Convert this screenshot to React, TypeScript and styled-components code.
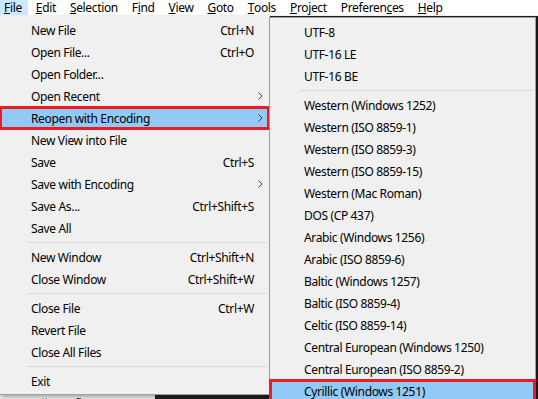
import React from 'react';
import styled, { createGlobalStyle } from 'styled-components';

const GlobalStyle = createGlobalStyle`
  html, body {
    margin: 0;
    padding: 0;
    width: 538px;
    height: 399px;
    overflow: hidden;
    background: #1e1e1e;
  }
  * { box-sizing: border-box; }
`;

type Entry =
  | { kind: 'item'; label: string; shortcut?: string; sub?: boolean; marked?: boolean }
  | { kind: 'sep' };

const fileEntries: Entry[] = [
  { kind: 'item', label: 'New File', shortcut: 'Ctrl+N' },
  { kind: 'item', label: 'Open File...', shortcut: 'Ctrl+O' },
  { kind: 'item', label: 'Open Folder...' },
  { kind: 'item', label: 'Open Recent', sub: true },
  { kind: 'item', label: 'Reopen with Encoding', sub: true, marked: true },
  { kind: 'item', label: 'New View into File' },
  { kind: 'item', label: 'Save', shortcut: 'Ctrl+S' },
  { kind: 'item', label: 'Save with Encoding', sub: true },
  { kind: 'item', label: 'Save As...', shortcut: 'Ctrl+Shift+S' },
  { kind: 'item', label: 'Save All' },
  { kind: 'sep' },
  { kind: 'item', label: 'New Window', shortcut: 'Ctrl+Shift+N' },
  { kind: 'item', label: 'Close Window', shortcut: 'Ctrl+Shift+W' },
  { kind: 'sep' },
  { kind: 'item', label: 'Close File', shortcut: 'Ctrl+W' },
  { kind: 'item', label: 'Revert File' },
  { kind: 'item', label: 'Close All Files' },
  { kind: 'sep' },
  { kind: 'item', label: 'Exit' },
];

const encodings: Entry[] = [
  { kind: 'item', label: 'UTF-8' },
  { kind: 'item', label: 'UTF-16 LE' },
  { kind: 'item', label: 'UTF-16 BE' },
  { kind: 'sep' },
  { kind: 'item', label: 'Western (Windows 1252)' },
  { kind: 'item', label: 'Western (ISO 8859-1)' },
  { kind: 'item', label: 'Western (ISO 8859-3)' },
  { kind: 'item', label: 'Western (ISO 8859-15)' },
  { kind: 'item', label: 'Western (Mac Roman)' },
  { kind: 'item', label: 'DOS (CP 437)' },
  { kind: 'item', label: 'Arabic (Windows 1256)' },
  { kind: 'item', label: 'Arabic (ISO 8859-6)' },
  { kind: 'item', label: 'Baltic (Windows 1257)' },
  { kind: 'item', label: 'Baltic (ISO 8859-4)' },
  { kind: 'item', label: 'Celtic (ISO 8859-14)' },
  { kind: 'item', label: 'Central European (Windows 1250)' },
  { kind: 'item', label: 'Central European (ISO 8859-2)' },
  { kind: 'item', label: 'Cyrillic (Windows 1251)', marked: true },
];

// [label, index of the underlined mnemonic letter]
const topMenus: [string, number][] = [
  ['File', 0],
  ['Edit', 0],
  ['Selection', 0],
  ['Find', 1],
  ['View', 0],
  ['Goto', 0],
  ['Tools', 0],
  ['Project', 0],
  ['Preferences', 8],
  ['Help', 0],
];

function Chevron() {
  return (
    <ArrowIcon width="5" height="8" viewBox="0 0 5 8">
      <polyline points="0.5,0.5 4,4 0.5,7.5" fill="none" stroke="#333" strokeWidth="1" />
    </ArrowIcon>
  );
}

function MenuList({ entries, inset }: { entries: Entry[]; inset: number }) {
  return (
    <>
      {entries.map((e, i) =>
        e.kind === 'sep' ? (
          <Separator key={i} $inset={inset} />
        ) : (
          <Item key={i} $marked={!!e.marked} $inset={inset}>
            <Label>{e.label}</Label>
            {e.shortcut && <Shortcut>{e.shortcut}</Shortcut>}
            {e.sub && <Chevron />}
          </Item>
        )
      )}
    </>
  );
}

export default function App() {
  return (
    <Window>
      <GlobalStyle />
      <MenuBar>
        {topMenus.map(([name, idx], i) => (
          <TopItem key={name} $active={i === 0}>
            {name.slice(0, idx)}
            <Mnemonic>{name[idx]}</Mnemonic>
            {name.slice(idx + 1)}
          </TopItem>
        ))}
      </MenuBar>
      <Workspace>
        <Sidebar>
          <SideRow>
            <SideIcon>/*</SideIcon>
            Carfix.tra
          </SideRow>
        </Sidebar>
        <Editor />
      </Workspace>

      <FileMenu>
        <MenuList entries={fileEntries} inset={31} />
      </FileMenu>
      <SubMenu>
        <MenuList entries={encodings} inset={34} />
      </SubMenu>
    </Window>
  );
}

const Window = styled.div`
  position: relative;
  width: 538px;
  height: 399px;
  display: flex;
  flex-direction: column;
  font-family: 'Segoe UI', 'Noto Sans', 'Open Sans', sans-serif;
  font-size: 12px;
  letter-spacing: -0.35px;
  color: #000;
  overflow: hidden;
`;

const MenuBar = styled.div`
  height: 16px;
  flex-shrink: 0;
  background: #fff;
  display: flex;
  align-items: stretch;
  border-bottom: 1px solid #f0f0f0;
`;

const TopItem = styled.div<{ $active: boolean }>`
  display: flex;
  align-items: center;
  padding: 0 6px 0 4px;
  margin-right: 4px;
  line-height: 15px;
  height: 15px;
  background: ${p => (p.$active ? '#cce8ff' : 'transparent')};
  white-space: pre;
`;

const Mnemonic = styled.u`
  text-decoration: underline;
  text-underline-offset: 1px;
`;

const Workspace = styled.div`
  flex: 1;
  display: flex;
`;

const Sidebar = styled.div`
  width: 155px;
  background: #e6e6e6;
  display: flex;
  flex-direction: column;
  justify-content: flex-end;
`;

const SideRow = styled.div`
  height: 18px;
  margin-bottom: -14px;
  display: flex;
  align-items: flex-start;
  gap: 8px;
  padding-left: 40px;
  color: #222;
`;

const SideIcon = styled.span`
  color: #777;
  font-size: 10px;
`;

const Editor = styled.div`
  flex: 1;
  background: #1e1e1e;
`;

const Panel = styled.div`
  position: absolute;
  background: #f0f0f0;
  border: 1px solid #a0a0a0;
  display: flex;
  flex-direction: column;
  box-shadow: 2px 2px 3px rgba(0, 0, 0, 0.25);
`;

const FileMenu = styled(Panel)`
  top: 16px;
  left: 0;
  width: 270px;
  padding: 2px 0;
  border-left: none;
  border-top-color: #f0f0f0;
`;

const SubMenu = styled(Panel)`
  top: 17px;
  left: 269px;
  width: 267px;
  height: 400px;
  padding: 3px 0;
`;

const Item = styled.div<{ $marked: boolean; $inset: number }>`
  position: relative;
  height: 22px;
  flex-shrink: 0;
  display: flex;
  align-items: center;
  padding: 0 6px 0 ${p => p.$inset}px;
  background: ${p => (p.$marked ? '#91c9f7' : 'transparent')};
  box-shadow: ${p => (p.$marked ? '0 0 0 1px #ed1c24, inset 0 0 0 2px #ed1c24' : 'none')};
  white-space: nowrap;
`;

const Label = styled.span`
  flex: 1;
`;

const Shortcut = styled.span`
  margin-right: 9px;
`;

const ArrowIcon = styled.svg`
  flex-shrink: 0;
`;

const Separator = styled.div<{ $inset: number }>`
  height: 7px;
  flex-shrink: 0;
  display: flex;
  align-items: center;
  padding: 0 2px 0 ${p => p.$inset - 4}px;
  &::after {
    content: '';
    flex: 1;
    height: 1px;
    background: #d7d7d7;
  }
`;
